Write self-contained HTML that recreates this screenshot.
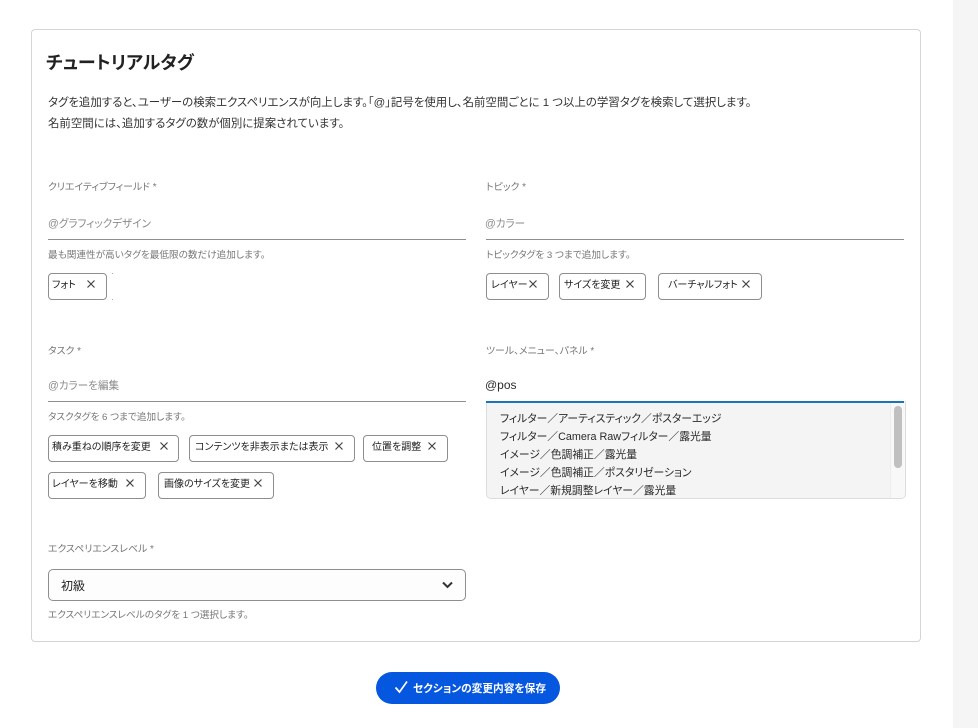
<!DOCTYPE html>
<html lang="ja">
<head>
<meta charset="utf-8">
<title>チュートリアルタグ</title>
<style>
html,body{margin:0;padding:0;background:#fff}
body{width:978px;height:728px;position:relative;overflow:hidden;font-family:"Liberation Sans","Noto Sans CJK JP",sans-serif;font-feature-settings:"palt";color:#2c2c2c}
.a{position:absolute;white-space:nowrap}
#strip{position:absolute;left:953px;top:0;width:25px;height:728px;background:#f5f5f5}
#card{position:absolute;left:31px;top:29px;width:888px;height:611px;border:1px solid #d5d5d5;border-radius:4px}
.title{left:46px;top:50px;font-size:18px;line-height:26px;font-weight:700;color:#222}
.p{left:48px;font-size:11.44px;line-height:20px;color:#333}
.lbl{font-size:9.9px;line-height:14px;color:#777}
.ph{font-size:10.6px;line-height:16px;color:#8a8a8a}
.hlp{font-size:9.65px;line-height:14px;color:#777}
.line{position:absolute;height:1px;background:#8e8e8e}
.tag{position:absolute;height:25px;border:1px solid #8e8e8e;border-radius:4px;background:#fff;box-sizing:content-box}
.tag span{position:absolute;top:3px;font-size:10px;line-height:17px;color:#222;white-space:nowrap}
.tag svg{position:absolute;top:5px;width:10px;height:10px}
#list{position:absolute;left:486px;top:401px;width:420px;height:98px;background:#f4f4f4;border:1px solid #dcdcdc;border-top:0;border-radius:0 0 5px 5px;box-sizing:border-box;overflow:hidden}
#listbar{position:absolute;left:486px;top:401px;width:418px;height:2px;background:#1b74b8}
.li{position:absolute;left:13px;font-size:10.8px;line-height:18px;color:#2a2a2a;white-space:nowrap}
#track{position:absolute;right:0;top:0;width:14px;height:98px;background:#f8f8f8;border-left:1px solid #ececec}
#thumb{position:absolute;left:894px;top:406px;width:8px;height:62px;background:#c0c0c0;border-radius:4px}
#sel{position:absolute;left:48px;top:569px;width:418px;height:32px;border:1px solid #8e8e8e;border-radius:5px;box-sizing:border-box;background:#fdfdfd}
#btn{position:absolute;left:376px;top:672px;width:184px;height:32px;border-radius:16px;background:#0557e0}
#btn span{position:absolute;left:37px;top:8px;font-size:10.7px;line-height:18px;font-weight:700;color:#fff;white-space:nowrap}
.dot{position:absolute;width:1px;height:1px;background:#aaa}
</style>
</head>
<body>
<div id="strip"></div>
<div id="card"></div>

<div class="a title">チュートリアルタグ</div>
<div class="a p" style="top:93px">タグを追加すると、ユーザーの検索エクスペリエンスが向上します。「@」記号を使用し、名前空間ごとに 1 つ以上の学習タグを検索して選択します。</div>
<div class="a p" style="top:114px">名前空間には、追加するタグの数が個別に提案されています。</div>

<div class="a lbl" style="left:48px;top:181px">クリエイティブフィールド *</div>
<div class="a ph" style="left:48px;top:216px">@グラフィックデザイン</div>
<div class="line" style="left:48px;top:239px;width:418px"></div>
<div class="a hlp" style="left:48px;top:249px">最も関連性が高いタグを最低限の数だけ追加します。</div>
<div class="tag" style="left:48px;top:273px;width:57px"><span style="left:3px">フォト</span><svg style="left:37px" viewBox="0 0 10 10"><path d="M1.5 1.5L8.5 8.5M8.5 1.5L1.5 8.5" stroke="#444" stroke-width="1.2" fill="none"/></svg></div>
<div class="dot" style="left:112px;top:273px"></div>
<div class="dot" style="left:112px;top:299px"></div>

<div class="a lbl" style="left:486px;top:181px">トピック *</div>
<div class="a ph" style="left:485px;top:216px">@カラー</div>
<div class="line" style="left:486px;top:239px;width:418px"></div>
<div class="a hlp" style="left:486px;top:249px">トピックタグを 3 つまで追加します。</div>
<div class="tag" style="left:486px;top:273px;width:61px"><span style="left:4px">レイヤー</span><svg style="left:41px" viewBox="0 0 10 10"><path d="M1.5 1.5L8.5 8.5M8.5 1.5L1.5 8.5" stroke="#444" stroke-width="1.2" fill="none"/></svg></div>
<div class="tag" style="left:559px;top:273px;width:85px"><span style="left:4px">サイズを変更</span><svg style="left:65px" viewBox="0 0 10 10"><path d="M1.5 1.5L8.5 8.5M8.5 1.5L1.5 8.5" stroke="#444" stroke-width="1.2" fill="none"/></svg></div>
<div class="tag" style="left:658px;top:273px;width:102px"><span style="left:9px">バーチャルフォト</span><svg style="left:82px" viewBox="0 0 10 10"><path d="M1.5 1.5L8.5 8.5M8.5 1.5L1.5 8.5" stroke="#444" stroke-width="1.2" fill="none"/></svg></div>

<div class="a lbl" style="left:48px;top:345px">タスク *</div>
<div class="a ph" style="left:48px;top:378px">@カラーを編集</div>
<div class="line" style="left:48px;top:401px;width:418px"></div>
<div class="a hlp" style="left:48px;top:411px">タスクタグを 6 つまで追加します。</div>
<div class="tag" style="left:48px;top:435px;width:129px"><span style="left:3px">積み重ねの順序を変更</span><svg style="left:110px" viewBox="0 0 10 10"><path d="M1.5 1.5L8.5 8.5M8.5 1.5L1.5 8.5" stroke="#444" stroke-width="1.2" fill="none"/></svg></div>
<div class="tag" style="left:189px;top:435px;width:164px"><span style="left:5px">コンテンツを非表示または表示</span><svg style="left:144px" viewBox="0 0 10 10"><path d="M1.5 1.5L8.5 8.5M8.5 1.5L1.5 8.5" stroke="#444" stroke-width="1.2" fill="none"/></svg></div>
<div class="tag" style="left:363px;top:435px;width:83px"><span style="left:8px">位置を調整</span><svg style="left:63px" viewBox="0 0 10 10"><path d="M1.5 1.5L8.5 8.5M8.5 1.5L1.5 8.5" stroke="#444" stroke-width="1.2" fill="none"/></svg></div>
<div class="tag" style="left:48px;top:472px;width:96px"><span style="left:3px">レイヤーを移動</span><svg style="left:76px" viewBox="0 0 10 10"><path d="M1.5 1.5L8.5 8.5M8.5 1.5L1.5 8.5" stroke="#444" stroke-width="1.2" fill="none"/></svg></div>
<div class="tag" style="left:158px;top:472px;width:114px"><span style="left:5px">画像のサイズを変更</span><svg style="left:94px" viewBox="0 0 10 10"><path d="M1.5 1.5L8.5 8.5M8.5 1.5L1.5 8.5" stroke="#444" stroke-width="1.2" fill="none"/></svg></div>

<div class="a lbl" style="left:486px;top:345px">ツール、メニュー、パネル *</div>
<div class="a" style="left:485px;top:377px;font-size:12px;line-height:16px;color:#2c2c2c">@pos</div>
<div id="list">
<div class="li" style="top:9px">フィルター／アーティスティック／ポスターエッジ</div>
<div class="li" style="top:27px">フィルター／Camera Rawフィルター／露光量</div>
<div class="li" style="top:45px">イメージ／色調補正／露光量</div>
<div class="li" style="top:63px">イメージ／色調補正／ポスタリゼーション</div>
<div class="li" style="top:81px">レイヤー／新規調整レイヤー／露光量</div>
<div id="track"></div>
</div>
<div id="listbar"></div>
<div id="thumb"></div>

<div class="a lbl" style="left:48px;top:543px">エクスペリエンスレベル *</div>
<div id="sel"></div>
<div class="a" style="left:61px;top:577px;font-size:12px;line-height:18px;color:#222">初級</div>
<svg style="position:absolute;left:441px;top:580px" width="13" height="10" viewBox="0 0 13 10"><path d="M2 2.5L6.5 7L11 2.5" stroke="#333" stroke-width="2" fill="none"/></svg>
<div class="a hlp" style="left:48px;top:609px">エクスペリエンスレベルのタグを 1 つ選択します。</div>

<div id="btn"><svg style="position:absolute;left:18px;top:8px" width="15" height="14" viewBox="0 0 15 14"><path d="M1.5 7.5L5.5 12L13 1.5" stroke="#fff" stroke-width="1.7" fill="none"/></svg><span>セクションの変更内容を保存</span></div>
</body>
</html>
